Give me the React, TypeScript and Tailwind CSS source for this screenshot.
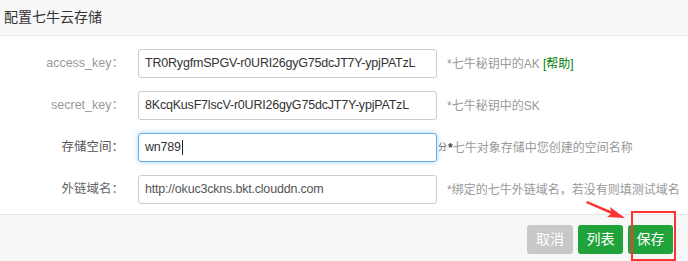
export default function App() {
  const rows = [
    { label: 'access_key：', labelCls: 'text-[#999]', value: 'TR0RygfmSPGV-r0URI26gyG75dcJT7Y-ypjPATzL', hint: 'ak' },
    { label: 'secret_key：', labelCls: 'text-[#999]', value: '8KcqKusF7lscV-r0URI26gyG75dcJT7Y-ypjPATzL', hint: 'sk' },
    { label: '存储空间：', labelCls: 'text-[#555]', value: 'wn789', hint: 'bucket' },
    { label: '外链域名：', labelCls: 'text-[#666]', value: 'http://okuc3ckns.bkt.clouddn.com', hint: 'domain' },
  ];

  return (
    <div
      className="relative w-[688px] h-[261px] bg-white overflow-hidden text-[12px]"
      style={{ fontFamily: '"Liberation Sans", Arial, "Noto Sans CJK SC", sans-serif' }}
    >
      {/* header */}
      <div className="h-[36px] bg-[#f8f8f8] border-b border-[#e8e8e8] flex items-center pl-[4px]">
        <span className="text-[14px] text-[#333]">配置七牛云存储</span>
      </div>

      {/* form */}
      <div className="flex flex-col gap-[13px] pt-[13px] pb-[10px]">
        {rows.map((r) => (
          <div key={r.hint} className="flex items-center h-[29px]">
            <div className={`w-[124px] shrink-0 text-right whitespace-nowrap text-[12.5px] ${r.labelCls}`}>{r.label}</div>
            <div
              className={`ml-[14px] w-[299px] shrink-0 h-[29px] rounded-[3px] border flex items-center px-[6px] whitespace-nowrap overflow-hidden text-[12.5px] tracking-[-0.2px] ${
                r.hint === 'bucket'
                  ? 'border-[#66afe9] shadow-[0_0_5px_rgba(102,175,233,0.6)] text-[#333]'
                  : r.hint === 'domain'
                  ? 'border-[#ccc] text-[#555]'
                  : 'border-[#ccc] text-[#333]'
              }`}
            >
              {r.value}
              {r.hint === 'bucket' && <span className="w-px h-[15px] bg-[#222] ml-px" />}
            </div>
            {r.hint === 'ak' && (
              <div className="ml-[10px] text-[#999] whitespace-nowrap">
                *七牛秘钥中的AK <span className="text-[#008000]">[帮助]</span>
              </div>
            )}
            {r.hint === 'sk' && <div className="ml-[10px] text-[#999] whitespace-nowrap">*七牛秘钥中的SK</div>}
            {r.hint === 'bucket' && (
              <div className="ml-[1px] flex items-center whitespace-nowrap text-[#999]">
                <span className="text-[9px] text-[#666]">分</span>
                <span className="text-[#444] font-bold ml-[1px]">*</span>
                <span>七牛对象存储中您创建的空间名称</span>
              </div>
            )}
            {r.hint === 'domain' && (
              <div className="ml-[10px] text-[#999] whitespace-nowrap">*绑定的七牛外链域名，若没有则填测试域名</div>
            )}
          </div>
        ))}
      </div>

      {/* footer */}
      <div className="h-[47px] bg-[#f6f7f7] border-t border-[#e8e8e8] flex items-start justify-end pt-[10px] pr-[15px] gap-[5px]">
        <button className="w-[46px] h-[29px] rounded-[3px] bg-[#c8c8c8] text-white text-[14px]">取消</button>
        <button className="w-[45px] h-[29px] rounded-[3px] bg-[#21a33b] text-white text-[14px]">列表</button>
        <button className="w-[45px] h-[29px] rounded-[3px] bg-[#21a33b] text-white text-[14px]">保存</button>
      </div>

      {/* annotation */}
      <div className="absolute left-[631px] top-[211px] w-[45px] h-[50px] border-2 border-[#ff3333]" />
      <svg className="absolute left-[585px] top-[198px]" width="42" height="24" viewBox="0 0 42 24">
        <path d="M2 3 L26 13 L25 9 L40 20 L22 19 L26 16 L1 5 Z" fill="#ff3333" />
      </svg>
    </div>
  );
}
